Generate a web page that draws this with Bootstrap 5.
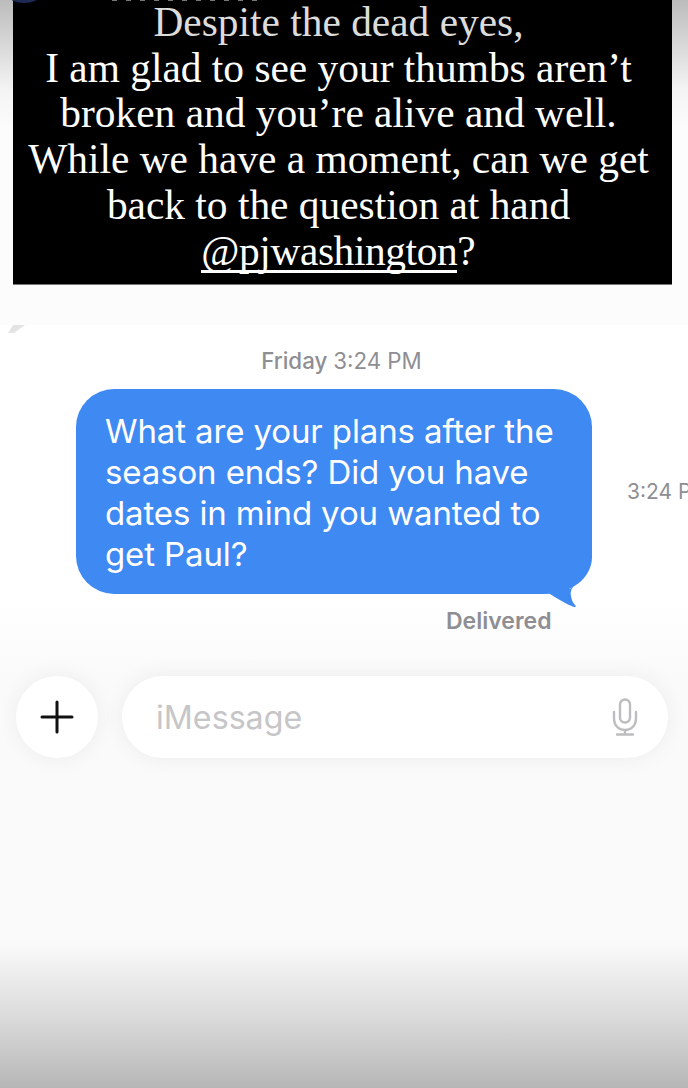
<!DOCTYPE html>
<html lang="en">
<head>
  <meta charset="utf-8">
  <title>iMessage story</title>
  <link href="https://cdn.jsdelivr.net/npm/bootstrap@5.3.0/dist/css/bootstrap.min.css" rel="stylesheet">
  <style>
    html, body { height: 1088px; overflow: hidden; }
    body { background: #fff; font-family: Inter, "Liberation Sans", sans-serif; }
    .story-page { width: 688px; height: 1088px; overflow: hidden; position: relative;
      background: linear-gradient(#fafafa 0, #fafafa 945px, #f2f2f2 962px, #dcdcdc 1015px, #b6b6b6 1088px); }
    .top-shade { background: linear-gradient(#bcbcbc 0, #d8d8d8 45px, #f4f4f4 90px, #fcfcfc 130px, #fcfcfc 325px); height: 325px; padding: 0 16px 0 13px; }
    .quote-box { background: #000; color: #fff; height: 285px; border-bottom: 1px solid #777; font-family: "Liberation Serif", serif;
      font-size: 41.4px; line-height: 45.7px; padding-right: 8px; }
    .quote-first { color: #dcdcdc; }
    .quote-mention { border-bottom: 3px solid #fff; line-height: 37px; display: inline-block; letter-spacing: -.4px; }
    .avatar-sliver { position: absolute; left: 8px; top: -13px; width: 32px; height: 16px; border-radius: 50%; background: #1f2a55; z-index: 2; }
    .top-marks { position: absolute; left: 112px; top: 0; width: 150px; height: 1px; background: repeating-linear-gradient(90deg, #777 0 5px, transparent 5px 14px); }
    .corner-mark { position: absolute; left: 8px; top: 325px; width: 17px; height: 8px; background: #e4e4e4; clip-path: polygon(5px 0, 100% 0, 6px 100%, 0 100%); }
    .chat-area { background: linear-gradient(#fff 0, #fff 270px, #fafafa 350px); height: 351px; }
    .day-stamp { color: #8e8e93; font-size: 22.3px; line-height: 26px; padding: 23px 5px 0 0; font-weight: 500; }
    .day-stamp span { font-weight: 400; }
    .bubble-row { margin-top: 15px; padding-left: 76px; white-space: nowrap; }
    .blue-bubble { position: relative; width: 516px; height: 205px; background: #3f89f2; color: #fff;
      border-radius: 38px 38px 46px 38px / 38px 38px 37px 38px;
      font-size: 33px; line-height: 41px; padding: 22px 20px 0 29px; white-space: normal; letter-spacing: -.12px; flex: none; }
    .bubble-tail { position: absolute; left: 464px; top: 180px; width: 52px; height: 40px; }
    .side-time { color: #8e8e93; font-size: 21px; margin-left: 35px; flex: none; }
    .status-text { color: #8e8e93; font-size: 23px; font-weight: 600; margin: 14px 0 0 446px; line-height: 26px; }
    .compose-row { padding: 0 20px 0 16px; }
    .plus-btn { width: 82px; height: 82px; background: #fff; box-shadow: 0 0 22px rgba(0,0,0,.06); }
    .input-pill { height: 82px; width: 546px; margin-left: 24px; background: #fff; border-radius: 41px; padding: 0 30px 0 34px; box-shadow: 0 0 22px rgba(0,0,0,.06); }
    .input-hint { color: #c6c6c8; font-size: 32.2px; padding-top: 2px; }
  </style>
</head>
<body>
<div class="story-page">
  <div class="avatar-sliver"></div>

  <!-- Quote card -->
  <div class="top-shade">
    <div class="quote-box text-center">
      <div class="quote-first">Despite the dead eyes,</div>
      <div>I am glad to see your thumbs aren’t</div>
      <div>broken and you’re alive and well.</div>
      <div>While we have a moment, can we get</div>
      <div>back to the question at hand</div>
      <div><span class="quote-mention">@pjwashington</span>?</div>
    </div>
  </div>
  <div class="top-marks"></div>
  <div class="corner-mark"></div>

  <!-- Conversation -->
  <div class="chat-area">
    <div class="day-stamp text-center">Friday <span>3:24 PM</span></div>
    <div class="bubble-row d-flex align-items-center">
      <div class="blue-bubble">
        What are your plans after the season ends? Did you have dates in mind you wanted to get Paul?
        <svg class="bubble-tail" viewBox="0 0 52 40"><path d="M6 20 H30 L34 17 C31 20 30 23 31 27 C31.500 31 33 34 35 36 C36.500 37.500 35.500 38.500 34 38 C26 35 18 30 10 25 Z" fill="#3f89f2"/></svg>
      </div>
      <div class="side-time">3:24 PM</div>
    </div>
    <div class="status-text">Delivered</div>
  </div>

  <!-- Compose bar -->
  <div class="compose-row d-flex align-items-center">
    <div class="plus-btn rounded-circle d-flex align-items-center justify-content-center flex-shrink-0">
      <svg width="34" height="34" viewBox="0 0 34 34"><path d="M17 2 V32 M2 17 H32" stroke="#111" stroke-width="3" stroke-linecap="round"/></svg>
    </div>
    <div class="input-pill d-flex align-items-center justify-content-between flex-shrink-0">
      <span class="input-hint">iMessage</span>
      <svg width="26" height="38" viewBox="0 0 26 38" fill="none" stroke="#bdbdbf" stroke-width="2.4" stroke-linecap="round"><rect x="8" y="1.500" width="10" height="23" rx="5"/><path d="M2 14 V20 C2 28 7 32 13 32 C19 32 24 28 24 20 V14 M13 32 V36.500 M5 36.500 H21"/></svg>
    </div>
  </div>
</div>
<script src="https://cdn.jsdelivr.net/npm/bootstrap@5.3.0/dist/js/bootstrap.bundle.min.js"></script>
</body>
</html>
